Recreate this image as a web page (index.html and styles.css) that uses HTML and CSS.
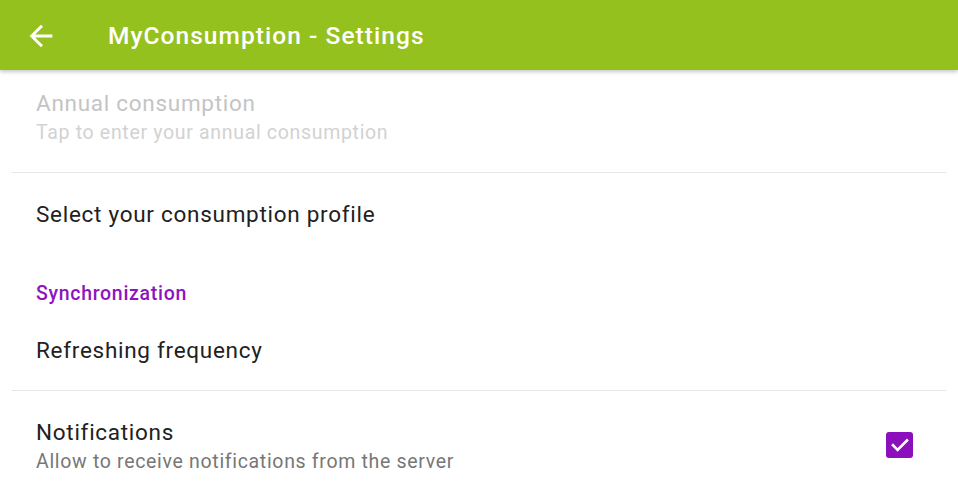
FILE: index.html
```html
<!DOCTYPE html>
<html>
<head>
<meta charset="utf-8">
<link rel="stylesheet" href="styles.css">
</head>
<body>
<header class="appbar">
  <svg class="back" viewBox="0 0 24 24"><path d="M20 11H7.83l5.59-5.59L12 4l-8 8 8 8 1.41-1.41L7.83 13H20v-2z" fill="#fff"/></svg>
  <h1 class="title">MyConsumption - Settings</h1>
</header>
<main class="list">
  <div class="pref disabled">
    <div class="pref-text">
      <div class="pref-title">Annual consumption</div>
      <div class="pref-summary">Tap to enter your annual consumption</div>
    </div>
  </div>
  <div class="divider"></div>
  <div class="pref single">
    <div class="pref-text">
      <div class="pref-title">Select your consumption profile</div>
    </div>
  </div>
  <div class="category">Synchronization</div>
  <div class="pref single compact">
    <div class="pref-text">
      <div class="pref-title">Refreshing frequency</div>
    </div>
  </div>
  <div class="divider"></div>
  <div class="pref last">
    <div class="pref-text">
      <div class="pref-title">Notifications</div>
      <div class="pref-summary">Allow to receive notifications from the server</div>
    </div>
    <span class="checkbox">
      <svg width="18" height="14" viewBox="0 0 18 14"><path d="M2 7.2l4.6 4.6L16 2.4" fill="none" stroke="#fff" stroke-width="2.6" stroke-linecap="square"/></svg>
    </span>
  </div>
</main>
</body>
</html>
```
FILE: styles.css
```css
html, body {
  margin: 0;
  padding: 0;
  background: #ffffff;
  font-family: Roboto, "Noto Sans", sans-serif;
  overflow: hidden;
}

.appbar {
  position: relative;
  z-index: 2;
  height: 70px;
  background: #95c11f;
  display: flex;
  align-items: center;
  box-shadow: 0 2px 4px rgba(0, 0, 0, 0.22);
}

.back {
  width: 34px;
  height: 34px;
  margin-left: 24px;
  margin-top: 1px;
}

.title {
  margin: 0 0 0 50px;
  font-size: 24.5px;
  font-weight: 500;
  color: #ffffff;
  letter-spacing: 1.05px;
}

.list {
  padding-top: 18px;
}

.pref {
  display: flex;
  align-items: center;
  padding: 0 45px 24px 36px;
}

.pref-title {
  font-size: 22.5px;
  line-height: 30px;
  letter-spacing: 0.72px;
  color: #212121;
}

.pref-summary {
  font-size: 19.5px;
  line-height: 30px;
  letter-spacing: 0.68px;
  color: #777777;
}

.pref-text {
  flex: 1;
}

.disabled .pref-title {
  color: #c4c4c4;
}

.disabled .pref-summary {
  color: #d2d2d2;
}

.single {
  padding-top: 26px;
  padding-bottom: 26px;
}

.compact {
  padding-top: 26px;
  padding-bottom: 25px;
}

.last {
  padding-top: 26px;
}

.divider {
  height: 1px;
  background: #e6e6e6;
  margin: 0 12px;
}

.category {
  padding: 24px 36px 0 36px;
  font-size: 19.5px;
  line-height: 30px;
  font-weight: 500;
  letter-spacing: 0.7px;
  color: #8e14c0;
}

.checkbox {
  width: 27px;
  height: 26px;
  border-radius: 3px;
  background: #8c0fbd;
  display: flex;
  align-items: center;
  justify-content: center;
  margin-top: -4px;
}
```
